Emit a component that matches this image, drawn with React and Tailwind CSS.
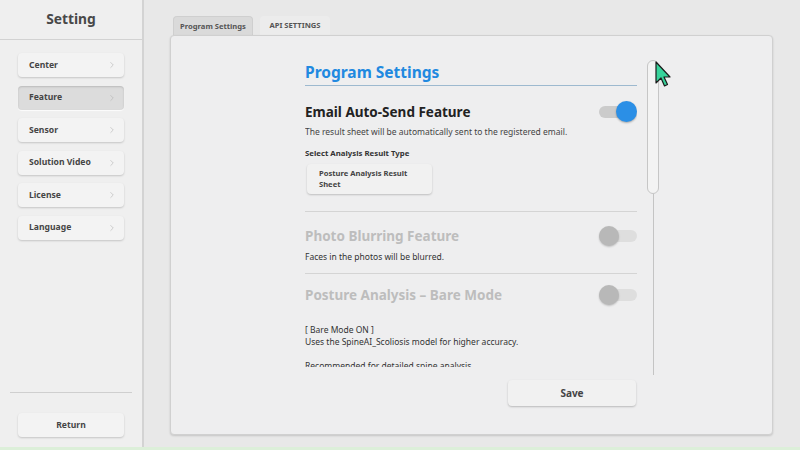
import React from "react";
import { ChevronRight } from "lucide-react";

const font = { fontFamily: '"Noto Sans", "Liberation Sans", sans-serif' };

const menu = ["Center", "Feature", "Sensor", "Solution Video", "License", "Language"];

const Toggle = ({ on }) =>
    on ? (
        <div className="relative w-[38px] h-[22px] flex items-center">
            <div className="w-[34px] h-[12px] rounded-full bg-[#cbcbcb]" />
            <div className="absolute right-0 top-0 w-[21px] h-[21px] rounded-full bg-[#2b8fe6] shadow-[0_1px_2px_rgba(0,0,0,0.3)]" />
        </div>
    ) : (
        <div className="relative w-[38px] h-[22px] flex items-center">
            <div className="w-[38px] h-[12px] rounded-full bg-[#dedede]" />
            <div className="absolute left-0 top-[1px] w-[20px] h-[20px] rounded-full bg-[#b8b8b8] shadow-[0_1px_2px_rgba(0,0,0,0.2)]" />
        </div>
    );

const Cursor = () => (
    <svg
        className="absolute left-[655px] top-[61px]"
        width="16"
        height="28"
        viewBox="0 0 16 28"
    >
        <path
            d="M1 1 L1 22 L6 17 L9.5 25 L12.5 23.5 L9 16 L15 16 Z"
            fill="#37d39b"
            stroke="#1b1b1b"
            strokeWidth="1.2"
            strokeLinejoin="round"
        />
    </svg>
);

export default function App() {
    return (
        <div className="relative w-[800px] h-[450px] flex flex-col overflow-hidden" style={font}>
            <div className="flex flex-1 min-h-0">
                {/* sidebar */}
                <aside className="w-[144px] bg-[#efefef] border-r-2 border-[#d3d3d3] flex flex-col">
                    <div className="h-[40px] border-b border-[#d2d2d2] flex items-center justify-center">
                        <h1 className="text-[13.8px] font-bold text-[#484848]">Setting</h1>
                    </div>
                    <nav className="flex flex-col gap-[8.5px] px-[18px] pt-[13px]">
                        {menu.map((m) => (
                            <button
                                key={m}
                                className={`h-[24px] rounded-[4px] flex items-center justify-between pl-[11px] pr-[7px] text-[8.6px] font-bold text-[#454545] ${
                                    m === "Feature"
                                        ? "bg-[#dcdcdc] shadow-[inset_0_1px_2px_rgba(0,0,0,0.15),0_1px_1px_rgba(255,255,255,0.8)]"
                                        : "bg-[#f3f3f3] shadow-[0_1px_2px_rgba(0,0,0,0.18)]"
                                }`}
                            >
                                <span>{m}</span>
                                <ChevronRight className="w-[10px] h-[10px] text-[#b4b4b4]" strokeWidth={1.5} />
                            </button>
                        ))}
                    </nav>
                    <div className="flex-1" />
                    <div className="mx-[10px] border-t border-[#cfcfcf]" />
                    <div className="px-[18px] pt-[17px] pb-[10px]">
                        <button className="w-full h-[24px] rounded-[4px] bg-[#f3f3f3] shadow-[0_1px_2px_rgba(0,0,0,0.18)] text-[8.6px] font-bold text-[#454545]">
                            Return
                        </button>
                    </div>
                </aside>

                {/* main */}
                <main className="flex-1 bg-[#e8e8e8] pl-[26px] pr-[27px] pt-[16px] pb-[12px] flex flex-col">
                    <div className="flex gap-[7px] ml-[3px] h-[20px]">
                        <div className="w-[80px] h-[20px] rounded-t-[4px] bg-[#dadada] border border-b-0 border-[#cfcfcf] flex items-center justify-center text-[7.6px] font-bold text-[#555]">
                            Program Settings
                        </div>
                        <div className="w-[70px] h-[20px] rounded-t-[4px] bg-[#ececec] flex items-center justify-center text-[7.6px] font-bold text-[#555]">
                            API SETTINGS
                        </div>
                    </div>
                    <section className="flex-1 -mt-[1px] bg-[#eeeeef] border border-[#d0d0d0] rounded-[4px] shadow-[0_1px_2px_rgba(0,0,0,0.15)] pt-[22px] flex flex-col">
                        <div className="flex h-[317px] ml-[134px]">
                            <div className="w-[332px] h-[309px] overflow-hidden pt-[2px]">
                                <h2 className="text-[15.5px] leading-[24px] font-bold text-[#2189e0] border-b border-[#9db9cf] pb-[1px]">
                                    Program Settings
                                </h2>

                                <div className="mt-[14px] flex items-center justify-between h-[24px]">
                                    <h3 className="text-[13.5px] font-bold text-[#222]">Email Auto-Send Feature</h3>
                                    <Toggle on />
                                </div>
                                <p className="mt-[1px] text-[8.5px] leading-[14px] text-[#444]">
                                    The result sheet will be automatically sent to the registered email.
                                </p>
                                <p className="mt-[8px] text-[7.8px] leading-[12px] font-bold text-[#333]">
                                    Select Analysis Result Type
                                </p>
                                <button className="mt-[5px] ml-[2px] w-[125px] h-[30px] rounded-[4px] bg-[#f1f1f1] shadow-[0_1px_2px_rgba(0,0,0,0.2)] pl-[12px] text-left text-[7.6px] leading-[11px] font-bold text-[#444]">
                                    Posture Analysis Result
                                    <br />
                                    Sheet
                                </button>

                                <div className="mt-[17px] border-t border-[#d4d4d4]" />
                                <div className="mt-[12px] flex items-center justify-between h-[24px]">
                                    <h3 className="text-[13.5px] font-bold text-[#bdbdbd]">Photo Blurring Feature</h3>
                                    <Toggle />
                                </div>
                                <p className="mt-[2px] text-[8.5px] leading-[14px] text-[#333]">
                                    Faces in the photos will be blurred.
                                </p>

                                <div className="mt-[9px] border-t border-[#d4d4d4]" />
                                <div className="mt-[9px] flex items-center justify-between h-[24px]">
                                    <h3 className="text-[13.5px] font-bold text-[#bdbdbd]">Posture Analysis – Bare Mode</h3>
                                    <Toggle />
                                </div>
                                <p className="mt-[17px] text-[8.5px] leading-[12px] text-[#333]">
                                    [ Bare Mode ON ]
                                    <br />
                                    Uses the SpineAI_Scoliosis model for higher accuracy.
                                    <br />
                                    <br />
                                    Recommended for detailed spine analysis.
                                </p>
                            </div>
                            <div className="ml-[10px] w-[12px] flex flex-col items-center pt-[2px]">
                                <div className="w-[12px] h-[134px] rounded-full border border-[#c6c6c6] bg-[#f3f3f3]" />
                                <div className="flex-1 w-px bg-[#c4c4c4]" />
                            </div>
                        </div>
                        <div className="ml-[134px] w-[332px] flex justify-end mt-[5px]">
                            <button className="w-[128px] h-[26px] mr-[1px] rounded-[4px] bg-[#f1f1f1] shadow-[0_1px_2px_rgba(0,0,0,0.22)] text-[10px] font-bold text-[#444]">
                                Save
                            </button>
                        </div>
                    </section>
                </main>
            </div>
            <div className="h-[3px] bg-[#dcefd9]" />
            <Cursor />
        </div>
    );
}
